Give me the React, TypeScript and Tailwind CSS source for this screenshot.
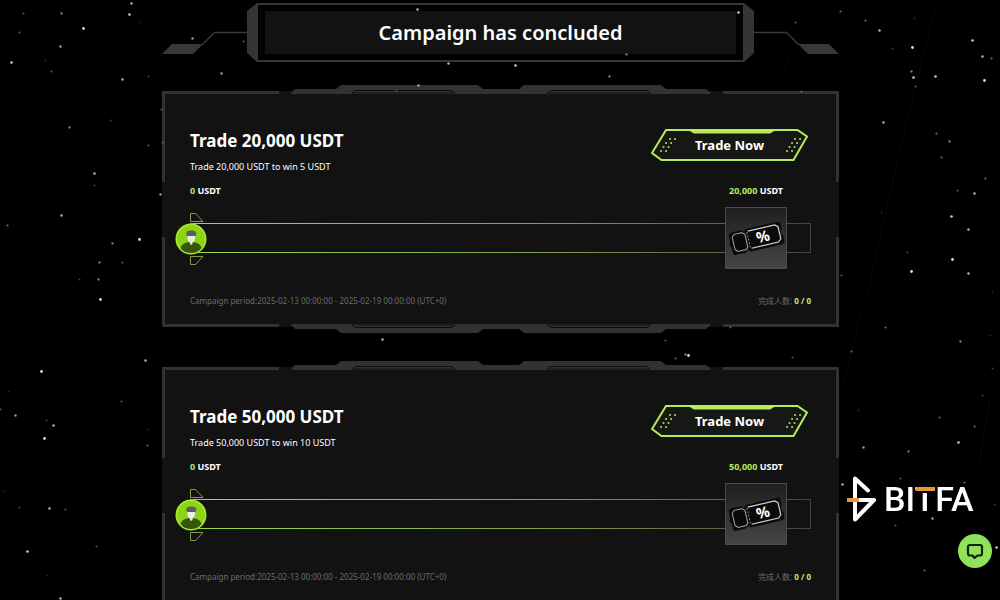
interface Campaign {
  id: string
  target: string
  reward: string
  period: string
  finished: string
}

const campaigns: Campaign[] = [
  {
    id: "trade-20000",
    target: "20,000",
    reward: "5 USDT",
    period: "2025-02-13 00:00:00 - 2025-02-19 00:00:00 (UTC+0)",
    finished: "0 / 0",
  },
  {
    id: "trade-50000",
    target: "50,000",
    reward: "10 USDT",
    period: "2025-02-13 00:00:00 - 2025-02-19 00:00:00 (UTC+0)",
    finished: "0 / 0",
  },
]

// x, y, brightness
const stars = [
  [23, 13, 0.4], [61, 13, 0.6], [131, 3, 0.8], [129, 14, 0.9], [140, 22, 0.2], [83, 28, 1], [19, 32, 0.4],
  [60, 46, 0.7], [11, 62, 0.9], [45, 60, 0.2], [51, 71, 0.4], [122, 79, 0.8], [148, 76, 0.3], [110, 120, 0.3],
  [69, 127, 0.6], [161, 109, 0.4], [148, 145, 0.4], [162, 142, 0.3], [94, 173, 0.8], [94, 185, 0.3],
  [160, 194, 0.7], [61, 215, 0.8], [7, 225, 0.5], [139, 239, 1], [112, 243, 0.6], [99, 262, 0.6], [122, 262, 0.4],
  [79, 279, 0.3], [98, 279, 0.6], [100, 299, 1], [41, 371, 1], [145, 360, 0.8], [8, 391, 0.2], [121, 401, 0.4],
  [0, 409, 0.4], [15, 415, 0.7], [46, 420, 0.3], [53, 425, 0.8], [44, 438, 1], [147, 445, 0.5], [148, 429, 0.2],
  [3, 491, 0.2], [19, 507, 0.3], [49, 508, 0.8], [65, 509, 0.4], [27, 551, 0.9], [96, 546, 0.4], [47, 575, 0.2],
  [60, 598, 0.8], [417, 9, 0.8], [448, 63, 0.8], [418, 85, 0.7], [396, 90, 0.3], [192, 38, 0.7], [221, 73, 0.7],
  [243, 41, 0.4], [738, 12, 0.9], [840, 11, 0.5], [795, 22, 0.4], [626, 54, 0.6], [515, 65, 0.9], [609, 76, 0.6],
  [801, 91, 0.4], [382, 339, 0.8], [665, 340, 0.4], [675, 358, 0.5], [688, 355, 1], [685, 354, 0.6],
  [730, 327, 0.4], [792, 357, 0.4], [865, 20, 0.5], [879, 30, 0.8], [914, 18, 0.2], [892, 48, 0.3], [912, 47, 1],
  [911, 71, 0.6], [913, 77, 0.9], [915, 86, 0.4], [935, 76, 0.9], [972, 40, 0.9], [982, 56, 0.8], [991, 58, 0.5],
  [984, 80, 1], [883, 122, 0.8], [936, 133, 0.5], [949, 141, 0.6], [941, 157, 0.5], [985, 178, 0.5],
  [957, 190, 0.4], [974, 193, 0.8], [951, 216, 0.9], [968, 229, 0.8], [881, 212, 0.2], [952, 259, 1],
  [911, 271, 1], [968, 273, 0.8], [841, 275, 0.4], [907, 252, 0.3], [992, 292, 0.2], [885, 327, 0.5],
  [960, 341, 0.6], [990, 335, 0.2], [851, 351, 0.5], [992, 368, 0.3], [982, 395, 0.3], [939, 417, 0.5],
  [974, 426, 0.5], [958, 442, 0.9], [863, 447, 0.7], [908, 451, 0.6], [858, 410, 0.2], [900, 478, 0.4],
  [842, 484, 0.8], [964, 482, 0.5], [994, 504, 0.3], [932, 518, 0.7], [895, 525, 0.4], [996, 547, 0.9],
  [924, 570, 0.5],
]

function StarField() {
  return (
    <svg
      className="pointer-events-none fixed inset-0 z-10 h-full w-full"
      viewBox="0 0 1000 600"
      preserveAspectRatio="xMidYMid slice"
      aria-hidden="true"
    >
      <path d="M790 52 780 80M936 5 900 150 866 300M862 310 842 390M990 400 978 470" stroke="#fff" strokeOpacity="0.04" fill="none" />
      {stars.map(([x, y, light]) => (
        <circle key={`${x}-${y}`} cx={x + 0.5} cy={y + 0.5} r={0.8 + light * 0.6} fill="#fff" opacity={light * 0.85} />
      ))}
    </svg>
  )
}

function BannerWing({ className = "" }: { className?: string }) {
  return (
    <svg className={`h-[59px] w-[96px] shrink-0 ${className}`} viewBox="0 0 96 59" fill="none" aria-hidden="true">
      <path d="M0 51 10 41H41L31 51Z" fill="#36383a" />
      <path d="M40 42 52.5 29.5H86" stroke="#36383a" strokeWidth="1.5" />
      <path d="M85 8 95 0H96V59H95L85 50Z" fill="#333537" />
    </svg>
  )
}

function Banner() {
  return (
    <header className="flex items-center">
      <BannerWing />
      <div className="flex-1 border-y-2 border-[#333537] bg-black px-[7px] py-1.5">
        <h1 className="bg-[#121212] text-center text-xl leading-[43px] font-semibold">Campaign has concluded</h1>
      </div>
      <BannerWing className="-scale-x-100" />
    </header>
  )
}

// raised plate on the top edge of a card, mirrored for the bottom edge
function FramePlate({ className }: { className: string }) {
  return (
    <svg className={`absolute left-1/2 h-[9px] w-[444px] -translate-x-1/2 ${className}`} viewBox="0 0 444 9" aria-hidden="true">
      <path d="M0 6H444V9H0Z" fill="#121212" />
      <path
        d="M12 8 16 4H57L62 0H199L204 4H240L245 0H382L387 4H427L432 8 431 9H13Z"
        fill="#303234"
      />
      <path d="M75 7H173L176 9H72ZM271 7H369L372 9H268Z" fill="#1f2021" />
      <path d="M73 8 76 5.500H172L176 8M268 8 272 5.500H368L371 8" stroke="#0b0b0b" fill="none" />
    </svg>
  )
}

function TradeButton() {
  return (
    <button type="button" className="relative mr-[3px] h-8 w-[157px] cursor-pointer text-[13px] leading-8 font-bold">
      <svg className="absolute inset-0 h-full w-full" viewBox="0 0 157 32" fill="none" aria-hidden="true">
        <path d="M15 1H146.500L156 7.500 142.500 31H10.500L1 24Z" fill="#161815" stroke="#b4ec5c" strokeWidth="2" />
        <path d="M37 1H125L119 4.500H43Z" fill="#b4ec5c" />
        <path
          d="M19 10h.1M24 10h.1M15 14h.1M20 14h.1M12.500 18h.1M17.500 18h.1M10 22h.1M15 22h.1M144 10h.1M149 10h.1M141 14h.1M146 14h.1M138.500 18h.1M143.500 18h.1M136 22h.1M141 22h.1"
          stroke="#a9d95e"
          strokeWidth="2"
          strokeLinecap="round"
        />
      </svg>
      <span className="relative">Trade Now</span>
    </button>
  )
}

function AvatarMarker() {
  return (
    <svg className="absolute top-[5px] -left-[15px] h-[54px] w-8" viewBox="0 0 32 54" fill="none" aria-hidden="true">
      <path d="M15.500 1.500H20.500L28 9.500H15.500Z" stroke="#7f9e50" />
      <path d="M15.500 44.500H28L20.500 52.500H15.500Z" stroke="#7f9e50" />
      <circle cx="16" cy="27" r="15.500" fill="#7fbf12" />
      <circle cx="16" cy="27" r="14.500" fill="#8ed316" stroke="#a6e82e" strokeWidth="1.500" />
      <path d="M5.500 36C6.500 32 11 30 16 30S25.500 32 26.500 36C23.500 39.800 20 41 16 41S8.500 39.800 5.500 36Z" fill="#35560b" />
      <path d="M12.500 22H20V26C20 28.500 18.500 30 17.500 30.500V32L16.200 33 15 32V30.500C13.500 30 12.500 28.500 12.500 26Z" fill="#e6efe0" />
      <path d="M12 19.500C13.500 18 19 18 20.500 19.500L21.500 21.500 20.500 24H12L11 21.500Z" fill="#59625a" />
    </svg>
  )
}

function TicketIcon() {
  return (
    <svg className="h-full w-full" viewBox="0 0 60 60" fill="none" aria-hidden="true">
      <g transform="rotate(-13 30 30)">
        <path
          d="M4 22Q4 19 7 19H17L19.500 21.500 22 19H54Q57 19 57 22V27L55 30.500 57 34V39Q57 42 54 42H22L19.500 40 17 42H7Q4 42 4 39V34L2.500 31 4 28Z"
          fill="#0a0a0a"
        />
        <path d="M17 21.500H9.500L7 24V36.500L9.500 39H18L20 37V24Z" stroke="#a8a8a8" />
        <path d="M23.500 21.500H51L54 24V36.500L51 39H23.500" stroke="#d0d0d0" strokeWidth="1.200" />
        <path d="M22.500 22V39" stroke="#8a8a8a" strokeDasharray="2 1.500" />
        <text x="37" y="35.500" textAnchor="middle" fill="#fff" fontSize="15" fontWeight="700">
          %
        </text>
      </g>
    </svg>
  )
}

function CampaignCard({ campaign }: { campaign: Campaign }) {
  const { target, reward, period, finished } = campaign
  return (
    <article className="relative border-[3px] border-[#303234] bg-[#121212] px-[25px] pt-[35px] pb-[15px]">
      <FramePlate className="-top-[9px]" />
      <FramePlate className="-bottom-[9px] -scale-y-100" />
      <span className="absolute top-[88px] -left-[3px] h-[55px] w-[3px] bg-[#121212]" />
      <span className="absolute top-[88px] -right-[3px] h-[55px] w-[3px] bg-[#121212]" />

      <div className="flex items-start justify-between">
        <div>
          <h2 className="text-[17px] leading-6 font-bold">Trade {target} USDT</h2>
          <p className="mt-1.5 text-[9px] leading-4">
            Trade {target} USDT to win {reward}
          </p>
        </div>
        <TradeButton />
      </div>

      <div className="mt-2 flex justify-between pr-6 text-[9px] leading-4 font-bold">
        <span>
          <span className="text-[#b4ec5c]">0</span> USDT
        </span>
        <span className="w-[62px] text-center whitespace-nowrap">
          <span className="text-[#b4ec5c]">{target}</span> USDT
        </span>
      </div>

      <div className="relative mt-2 flex h-[62px] items-center">
        <div
          role="progressbar"
          aria-label={`Trade ${target} USDT`}
          aria-valuenow={0}
          className="h-[30px] w-full bg-linear-to-r from-[#a3d84c] via-[#7f9e46] via-60% to-[#444] p-px"
        >
          <div className="h-full bg-[#121212]" />
        </div>
        <AvatarMarker />
        <div className="absolute top-0 right-6 size-[62px] border border-[#4a4a4a] bg-linear-to-b from-[#1f1f20] to-[#454647]">
          <TicketIcon />
        </div>
      </div>

      <footer className="mt-6 flex justify-between text-[8px] leading-4 text-[#6c6c6c]">
        <span>Campaign period:{period}</span>
        <span>
          完成人数: <b className="font-bold text-[#c4ec7c]">{finished}</b>
        </span>
      </footer>
    </article>
  )
}

function BitfaLogo() {
  return (
    <svg className="h-[46px] w-[130px]" viewBox="0 0 130 46" fill="none" role="img" aria-label="BITFA">
      <path d="M22 14.500 9 2.500V43.500L28 24H13" stroke="#fff" strokeWidth="4" strokeLinejoin="round" strokeLinecap="round" />
      <path d="M1 24H13" stroke="#e8963e" strokeWidth="4" />
      <text x="38" y="35" fill="#fff" fontFamily="Roboto, sans-serif" fontSize="34" fontWeight="500">
        BITFA
      </text>
      <path d="M70 10H91V17H70Z" fill="#000" />
      <path d="M70 11H89V15H70Z" fill="#e8963e" />
    </svg>
  )
}

export default function App() {
  return (
    <div className="h-screen overflow-y-auto bg-black pl-px font-['Noto_Sans','Noto_Sans_CJK_SC',sans-serif] text-white [scrollbar-width:none]">
      <StarField />
      <main className="mx-auto w-full max-w-[677px] pt-[3px] pb-10">
        <Banner />
        <section className="mt-[29px] flex flex-col gap-10">
          {campaigns.map((campaign) => (
            <CampaignCard key={campaign.id} campaign={campaign} />
          ))}
        </section>
      </main>

      <aside className="fixed right-2 bottom-8 z-20 flex flex-col items-end gap-3">
        <div className="mr-4">
          <BitfaLogo />
        </div>
        <button
          type="button"
          aria-label="Open chat"
          className="flex size-[34px] cursor-pointer items-center justify-center rounded-full bg-[#8fe35a]"
        >
          <svg className="size-5" viewBox="0 0 20 20" fill="none" aria-hidden="true">
            <path
              d="M12.500 14.500H15Q17 14.500 17 12.500V6Q17 4 15 4H5Q3 4 3 6V12.500Q3 14.500 5 14.500H7.500L9.500 17 12.500 14.500"
              stroke="#12210b"
              strokeWidth="2.200"
              strokeLinejoin="round"
              strokeLinecap="round"
            />
          </svg>
        </button>
      </aside>
    </div>
  )
}
